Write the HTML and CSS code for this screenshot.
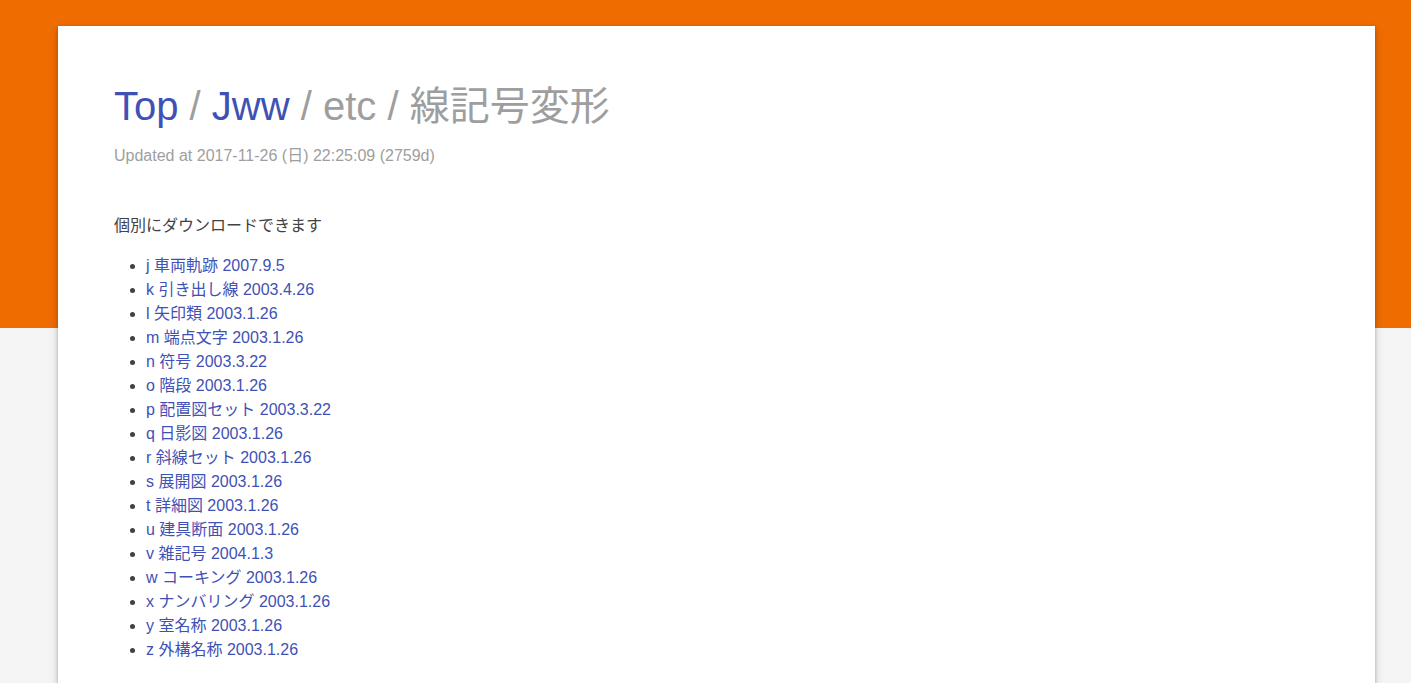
FILE: index.html
```html
<!DOCTYPE html>
<html>
<head>
  <meta charset="utf-8" />
  <title>線記号変形</title>
  <link rel="stylesheet" href="styles.css">
</head>
<body>
<div class="card">
  <h1 class="title"><a href="#">Top</a> / <a href="#">Jww</a> / etc / 線記号変形</h1>
  <div class="updated">Updated at 2017-11-26 (日) 22:25:09 (2759d)</div>
  <div class="content">
    <p>個別にダウンロードできます</p>
    <ul class="files">
      <li><a href="#">j 車両軌跡 2007.9.5</a></li>
      <li><a href="#">k 引き出し線 2003.4.26</a></li>
      <li><a href="#">l 矢印類 2003.1.26</a></li>
      <li><a href="#">m 端点文字 2003.1.26</a></li>
      <li><a href="#">n 符号 2003.3.22</a></li>
      <li><a href="#">o 階段 2003.1.26</a></li>
      <li><a href="#">p 配置図セット 2003.3.22</a></li>
      <li><a href="#">q 日影図 2003.1.26</a></li>
      <li><a href="#">r 斜線セット 2003.1.26</a></li>
      <li><a href="#">s 展開図 2003.1.26</a></li>
      <li><a href="#">t 詳細図 2003.1.26</a></li>
      <li><a href="#">u 建具断面 2003.1.26</a></li>
      <li><a href="#">v 雑記号 2004.1.3</a></li>
      <li><a href="#">w コーキング 2003.1.26</a></li>
      <li><a href="#">x ナンバリング 2003.1.26</a></li>
      <li><a href="#">y 室名称 2003.1.26</a></li>
      <li><a href="#">z 外構名称 2003.1.26</a></li>
    </ul>
  </div>
</div>
</body>
</html>
```

FILE: styles.css
```css
body {
  margin: 0;
  padding: 26px 36px 0 58px;
  font-family: "Liberation Sans", Arial, "Noto Sans CJK JP", sans-serif;
  color: #424242;
  background: linear-gradient(to bottom, #ef6c00 0, #ef6c00 328px, #f5f5f5 328px);
  min-height: 100vh;
  box-sizing: border-box;
}
a {
  color: #3f51b5;
  text-decoration: none;
}
.card {
  background: #fff;
  padding: 56px 56px 40px;
  box-shadow: 0 2px 4px rgba(0,0,0,0.25), 0 4px 10px rgba(0,0,0,0.12);
}
.title {
  margin: 0;
  font-size: 40px;
  font-weight: 400;
  line-height: 48px;
  color: #9e9e9e;
}
.updated {
  margin-top: 14px;
  font-size: 16px;
  line-height: 24px;
  color: #9e9e9e;
}
.content {
  margin-top: 46px;
  font-size: 16px;
}
.content p {
  margin: 0 0 16px;
  line-height: 24px;
}
.files {
  margin: 0;
  padding-left: 32px;
  line-height: 24px;
}
```
